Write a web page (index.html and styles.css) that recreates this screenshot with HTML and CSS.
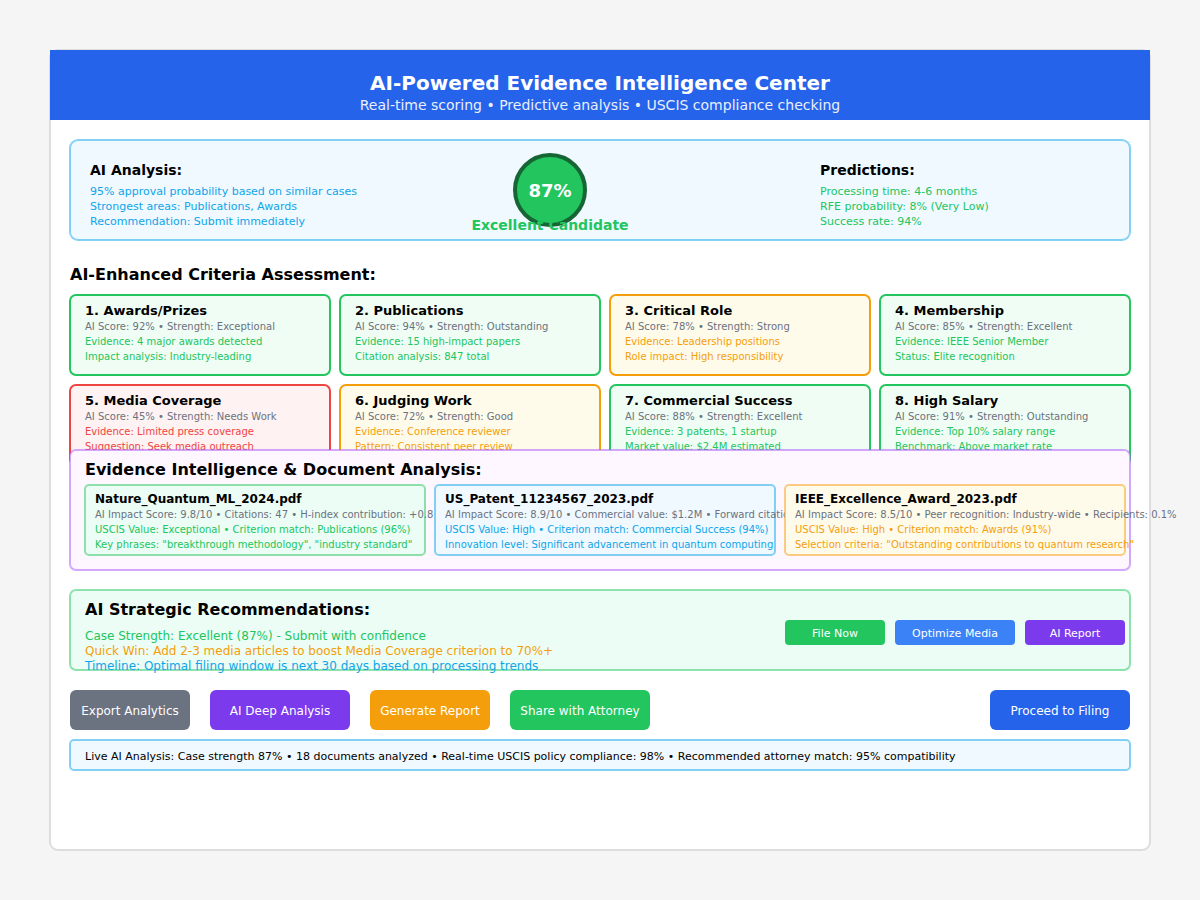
FILE: index.html
```html
<!DOCTYPE html>
<html lang="en">
<head>
<meta charset="utf-8">
<meta name="viewport" content="width=device-width, initial-scale=1">
<title>AI-Powered Evidence Intelligence Center</title>
<link rel="stylesheet" href="styles.css">
</head>
<body>
<main class="panel">
  <header class="banner">
    <h1 class="banner-title">AI-Powered Evidence Intelligence Center</h1>
    <p class="banner-subtitle">Real-time scoring • Predictive analysis • USCIS compliance checking</p>
  </header>
  <div class="content">
    <section class="box sky overview">
      <div class="summary">
        <h2 class="summary-title">AI Analysis:</h2>
        <p class="text-sky">95% approval probability based on similar cases</p>
        <p class="text-sky">Strongest areas: Publications, Awards</p>
        <p class="text-sky">Recommendation: Submit immediately</p>
      </div>
      <div class="score">
        <div class="score-circle">87%</div>
        <p class="score-label">Excellent Candidate</p>
      </div>
      <div class="summary">
        <h2 class="summary-title">Predictions:</h2>
        <p class="text-green">Processing time: 4-6 months</p>
        <p class="text-green">RFE probability: 8% (Very Low)</p>
        <p class="text-green">Success rate: 94%</p>
      </div>
    </section>

    <h2 class="section-title criteria-title">AI-Enhanced Criteria Assessment:</h2>
    <section class="criteria">
      <article class="criterion good">
        <h3 class="criterion-title">1. Awards/Prizes</h3>
        <p class="text-gray">AI Score: 92% • Strength: Exceptional</p>
        <p>Evidence: 4 major awards detected</p>
        <p>Impact analysis: Industry-leading</p>
      </article>
      <article class="criterion good">
        <h3 class="criterion-title">2. Publications</h3>
        <p class="text-gray">AI Score: 94% • Strength: Outstanding</p>
        <p>Evidence: 15 high-impact papers</p>
        <p>Citation analysis: 847 total</p>
      </article>
      <article class="criterion fair">
        <h3 class="criterion-title">3. Critical Role</h3>
        <p class="text-gray">AI Score: 78% • Strength: Strong</p>
        <p>Evidence: Leadership positions</p>
        <p>Role impact: High responsibility</p>
      </article>
      <article class="criterion good">
        <h3 class="criterion-title">4. Membership</h3>
        <p class="text-gray">AI Score: 85% • Strength: Excellent</p>
        <p>Evidence: IEEE Senior Member</p>
        <p>Status: Elite recognition</p>
      </article>
      <article class="criterion poor">
        <h3 class="criterion-title">5. Media Coverage</h3>
        <p class="text-gray">AI Score: 45% • Strength: Needs Work</p>
        <p>Evidence: Limited press coverage</p>
        <p>Suggestion: Seek media outreach</p>
      </article>
      <article class="criterion fair">
        <h3 class="criterion-title">6. Judging Work</h3>
        <p class="text-gray">AI Score: 72% • Strength: Good</p>
        <p>Evidence: Conference reviewer</p>
        <p>Pattern: Consistent peer review</p>
      </article>
      <article class="criterion good">
        <h3 class="criterion-title">7. Commercial Success</h3>
        <p class="text-gray">AI Score: 88% • Strength: Excellent</p>
        <p>Evidence: 3 patents, 1 startup</p>
        <p>Market value: $2.4M estimated</p>
      </article>
      <article class="criterion good">
        <h3 class="criterion-title">8. High Salary</h3>
        <p class="text-gray">AI Score: 91% • Strength: Outstanding</p>
        <p>Evidence: Top 10% salary range</p>
        <p>Benchmark: Above market rate</p>
      </article>
    </section>

    <section class="box purple evidence">
      <h2 class="section-title evidence-title">Evidence Intelligence &amp; Document Analysis:</h2>
      <div class="documents">
        <article class="box green document">
          <h3 class="document-title">Nature_Quantum_ML_2024.pdf</h3>
          <p class="text-gray">AI Impact Score: 9.8/10 • Citations: 47 • H-index contribution: +0.8</p>
          <p class="text-green">USCIS Value: Exceptional • Criterion match: Publications (96%)</p>
          <p class="text-green">Key phrases: "breakthrough methodology", "industry standard"</p>
        </article>
        <article class="box sky document">
          <h3 class="document-title">US_Patent_11234567_2023.pdf</h3>
          <p class="text-gray">AI Impact Score: 8.9/10 • Commercial value: $1.2M • Forward citations</p>
          <p class="text-sky">USCIS Value: High • Criterion match: Commercial Success (94%)</p>
          <p class="text-sky">Innovation level: Significant advancement in quantum computing</p>
        </article>
        <article class="box amber document">
          <h3 class="document-title">IEEE_Excellence_Award_2023.pdf</h3>
          <p class="text-gray">AI Impact Score: 8.5/10 • Peer recognition: Industry-wide • Recipients: 0.1%</p>
          <p class="text-amber">USCIS Value: High • Criterion match: Awards (91%)</p>
          <p class="text-amber">Selection criteria: "Outstanding contributions to quantum research"</p>
        </article>
      </div>
    </section>

    <section class="box green recommendations">
      <div>
        <h2 class="section-title">AI Strategic Recommendations:</h2>
        <div class="advice">
          <p class="text-green">Case Strength: Excellent (87%) - Submit with confidence</p>
          <p class="text-amber">Quick Win: Add 2-3 media articles to boost Media Coverage criterion to 70%+</p>
          <p class="text-sky">Timeline: Optimal filing window is next 30 days based on processing trends</p>
        </div>
      </div>
      <div class="quick-actions">
        <button type="button" class="button small narrow bg-green">File Now</button>
        <button type="button" class="button small medium bg-blue">Optimize Media</button>
        <button type="button" class="button small narrow bg-violet">AI Report</button>
      </div>
    </section>

    <nav class="actions">
      <button type="button" class="button medium bg-gray">Export Analytics</button>
      <button type="button" class="button wide bg-violet">AI Deep Analysis</button>
      <button type="button" class="button medium bg-amber">Generate Report</button>
      <button type="button" class="button wide bg-green">Share with Attorney</button>
      <button type="button" class="button wide bg-royal proceed">Proceed to Filing</button>
    </nav>

    <p class="box sky status">Live AI Analysis: Case strength 87% • 18 documents analyzed • Real-time USCIS policy compliance: 98% • Recommended attorney match: 95% compatibility</p>
  </div>
</main>
</body>
</html>
```
FILE: styles.css
```css
* {
  box-sizing: border-box;
}

body {
  margin: 0;
  padding: 49px;
  background: #f5f5f5;
  color: #000;
  font-family: "DejaVu Sans", Verdana, sans-serif;
}

h1, h2, h3, p {
  margin: 0;
}

.panel {
  min-height: calc(100vh - 98px);
  border: 2px solid #ddd;
  border-radius: 9px;
  background: #fff;
}

.banner {
  margin: -1px -1px 0;
  padding: 20px 0 6px;
  background: #2563eb;
  color: #fff;
  text-align: center;
}

.banner-title {
  font-size: 20px;
  line-height: 26px;
}

.banner-subtitle {
  font-size: 14px;
  line-height: 18px;
  opacity: 0.9;
}

.content {
  padding: 19px 18px;
}

/* Outlined boxes: a soft hairline on each side of the edge */
.box {
  border: 1px solid var(--line);
  border-radius: 7px;
  background-color: var(--fill);
  background-clip: padding-box;
  box-shadow: inset 0 0 0 1px var(--line);
}

.sky {
  --line: rgba(14, 165, 233, 0.5);
  --fill: #f0f9ff;
}

.green {
  --line: rgba(34, 197, 94, 0.5);
  --fill: #ecfdf5;
}

.amber {
  --line: rgba(245, 158, 11, 0.5);
  --fill: #fffbeb;
}

.purple {
  --line: rgba(168, 85, 247, 0.5);
  --fill: #fef7ff;
}

.text-sky { color: #0ea5e9; }
.text-green { color: #22c55e; }
.text-amber { color: #f59e0b; }
.criterion .text-gray,
.text-gray { color: #6b7280; }

.overview {
  display: grid;
  grid-template-columns: 38fr 35fr 29fr;
  padding: 0 20px;
  border-radius: 9px;
}

.summary {
  padding: 21px 0 11px;
  font-size: 11px;
  line-height: 15px;
}

.summary-title {
  margin-bottom: 5px;
  font-size: 14px;
  line-height: 18px;
}

.score {
  display: flex;
  flex-direction: column;
  align-items: center;
  width: 160px;
  padding-top: 13px;
}

.score-circle {
  display: flex;
  align-items: center;
  justify-content: center;
  width: 74px;
  height: 74px;
  border: 4px solid #166534;
  border-radius: 50%;
  background: #22c55e;
  color: #fff;
  font-size: 18px;
  font-weight: bold;
}

.score-label {
  margin-top: -11px;
  color: #22c55e;
  font-size: 14px;
  font-weight: bold;
  line-height: 18px;
  white-space: nowrap;
}

.section-title {
  font-size: 16px;
  line-height: 20px;
}

.criteria-title {
  margin: 24px 1px 9px;
}

.criteria {
  display: grid;
  grid-template-columns: 131fr 131fr 131fr 126fr;
  gap: 8px;
}

.criterion {
  padding: 7px 14px 10px;
  border: 2px solid;
  border-radius: 7px;
  font-size: 10px;
  line-height: 15px;
}

.criterion-title {
  color: #000;
  font-size: 13px;
  line-height: 16px;
}

.good {
  border-color: #22c55e;
  background: #f0fdf4;
  color: #22c55e;
}

.fair {
  border-color: #f59e0b;
  background: #fffbeb;
  color: #f59e0b;
}

.poor {
  border-color: #ef4444;
  background: #fef2f2;
  color: #ef4444;
}

/* Lies over the bottom edge of the criteria cards */
.evidence {
  position: relative;
  margin-top: -17px;
  padding: 10px 4px 14px 14px;
}

.evidence-title {
  padding-left: 1px;
}

.documents {
  display: grid;
  grid-template-columns: repeat(3, minmax(0, 1fr));
  gap: 8px;
  margin-top: 4px;
}

.document {
  position: relative;
  padding: 6px 10px 3px;
  border-radius: 5px;
  font-size: 10px;
  line-height: 15px;
  white-space: nowrap;
}

.document-title {
  font-size: 12px;
  line-height: 16px;
}

.recommendations {
  display: flex;
  justify-content: space-between;
  margin-top: 18px;
  padding: 10px 5px 0 15px;
}

.advice {
  margin: 9px 0 -4px;
  font-size: 12px;
  line-height: 15px;
}

.quick-actions {
  display: flex;
  align-items: flex-start;
  gap: 10px;
  padding-top: 20px;
}

.actions {
  display: flex;
  gap: 20px;
  margin: 19px 1px 9px;
}

.button {
  height: 40px;
  padding: 2px 0 0;
  border: 0;
  border-radius: 6px;
  color: #fff;
  font-family: inherit;
  font-size: 12px;
  cursor: pointer;
}

.small {
  height: 25px;
  border-radius: 4px;
  font-size: 11px;
}

.narrow { width: 100px; }
.medium { width: 120px; }
.wide { width: 140px; }

.proceed { margin-left: auto; }

.bg-green { background: #22c55e; }
.bg-blue { background: #3b82f6; }
.bg-violet { background: #7c3aed; }
.bg-gray { background: #6b7280; }
.bg-amber { background: #f59e0b; }
.bg-royal { background: #2563eb; }

.status {
  padding: 9px 15px 6px;
  border-radius: 5px;
  font-size: 11px;
  line-height: 15px;
}
```
